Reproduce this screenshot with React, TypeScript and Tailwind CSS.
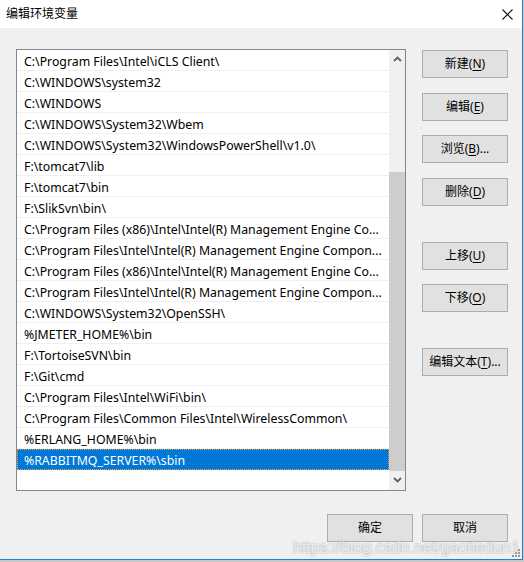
import type { ReactNode } from 'react'

const PATHS = [
  'C:\\Program Files\\Intel\\iCLS Client\\',
  'C:\\WINDOWS\\system32',
  'C:\\WINDOWS',
  'C:\\WINDOWS\\System32\\Wbem',
  'C:\\WINDOWS\\System32\\WindowsPowerShell\\v1.0\\',
  'F:\\tomcat7\\lib',
  'F:\\tomcat7\\bin',
  'F:\\SlikSvn\\bin\\',
  'C:\\Program Files (x86)\\Intel\\Intel(R) Management Engine Co...',
  'C:\\Program Files\\Intel\\Intel(R) Management Engine Compon...',
  'C:\\Program Files (x86)\\Intel\\Intel(R) Management Engine Co...',
  'C:\\Program Files\\Intel\\Intel(R) Management Engine Compon...',
  'C:\\WINDOWS\\System32\\OpenSSH\\',
  '%JMETER_HOME%\\bin',
  'F:\\TortoiseSVN\\bin',
  'F:\\Git\\cmd',
  'C:\\Program Files\\Intel\\WiFi\\bin\\',
  'C:\\Program Files\\Common Files\\Intel\\WirelessCommon\\',
  '%ERLANG_HOME%\\bin',
  '%RABBITMQ_SERVER%\\sbin',
]

const FONT = "font-['Noto_Sans','Noto_Sans_CJK_SC',sans-serif]"

function Btn({
  label,
  hot,
  tail = '',
  className = '',
}: {
  label: string
  hot?: string
  tail?: string
  className?: string
}) {
  return (
    <div
      className={`flex h-[28px] w-[86px] items-center justify-center border border-[#adadad] bg-[#e1e1e1] text-[12px] text-black ${className}`}
    >
      <span>
        {label}
        {hot && (
          <>
            (<span className="underline underline-offset-2">{hot}</span>)
          </>
        )}
        {tail}
      </span>
    </div>
  )
}

function Chevron({ down }: { down?: boolean }) {
  return (
    <svg width="9" height="6" viewBox="0 0 9 6" className={down ? 'rotate-180' : ''}>
      <path d="M1 5 L4.5 1.5 L8 5" fill="none" stroke="#606060" strokeWidth="1.8" />
    </svg>
  )
}

function Row({ text, selected }: { text: string; selected: boolean }): ReactNode {
  return (
    <div
      className={`h-[21px] border-b ${
        selected
          ? 'border-transparent bg-[#0078d7] text-white outline outline-1 outline-dotted -outline-offset-1 outline-[#f0a040]'
          : 'border-[#f0f0f0] text-black'
      } overflow-hidden whitespace-nowrap pl-[7px] text-[12.3px] leading-[23px]`}
    >
      {text}
    </div>
  )
}

export default function App() {
  return (
    <div className={`relative h-[562px] w-[524px] bg-[#c8c8c8] ${FONT}`}>
      <div className="flex h-[560px] w-[523px] flex-col border-b border-r border-[#1883d7] bg-[#f0f0f0]">
        <div className="flex h-[28px] shrink-0 items-center justify-between bg-white pl-[6px] pr-[9px]">
          <span className="text-[12px] text-black">编辑环境变量</span>
          <svg width="11" height="11" viewBox="0 0 11 11">
            <path d="M0.5 0.5 L10.5 10.5 M10.5 0.5 L0.5 10.5" stroke="#111" strokeWidth="1.1" />
          </svg>
        </div>

        <div className="flex flex-1 flex-col pl-[16px] pr-[14px] pt-[21px]">
          <div className="flex gap-[16px]">
            <div className="flex h-[442px] w-[391px] border border-[#828790] bg-white">
              <div className="flex-1">
                {PATHS.map((p, i) => (
                  <Row key={i} text={p} selected={i === PATHS.length - 1} />
                ))}
              </div>
              <div className="flex w-[16px] flex-col bg-[#f0f0f0]">
                <div className="flex h-[17px] items-center justify-center">
                  <Chevron />
                </div>
                <div className="h-[105px]" />
                <div className="h-[299px] bg-[#cdcdcd]" />
                <div className="flex h-[17px] items-center justify-center">
                  <Chevron down />
                </div>
              </div>
            </div>

            <div className="mt-[1px] flex flex-col">
              <Btn label="新建" hot="N" />
              <Btn label="编辑" hot="E" className="mt-[15px]" />
              <Btn label="浏览" hot="B" tail="..." className="mt-[14px]" />
              <Btn label="删除" hot="D" className="mt-[15px]" />
              <Btn label="上移" hot="U" className="mt-[36px]" />
              <Btn label="下移" hot="O" className="mt-[14px]" />
              <Btn label="编辑文本" hot="T" tail="..." className="mt-[36px]" />
            </div>
          </div>

          <div className="mt-[23px] flex justify-end gap-[9px]">
            <Btn label="确定" />
            <Btn label="取消" />
          </div>
        </div>
      </div>

      <span className="pointer-events-none absolute left-[293px] top-[536px] whitespace-nowrap font-['Liberation_Sans',sans-serif] text-[16px] text-white/70 [text-shadow:0_0_2px_rgba(0,0,0,0.35)]">
        https://blog.csdn.net/gaotiedun1
      </span>

      <svg className="absolute left-[512px] top-[549px]" width="9" height="9" viewBox="0 0 9 9">
        <rect x="6" y="0" width="2" height="2" fill="#9a9a9a" />
        <rect x="3" y="3" width="2" height="2" fill="#9a9a9a" />
        <rect x="6" y="3" width="2" height="2" fill="#9a9a9a" />
        <rect x="0" y="6" width="2" height="2" fill="#9a9a9a" />
        <rect x="3" y="6" width="2" height="2" fill="#9a9a9a" />
        <rect x="6" y="6" width="2" height="2" fill="#9a9a9a" />
      </svg>
    </div>
  )
}
